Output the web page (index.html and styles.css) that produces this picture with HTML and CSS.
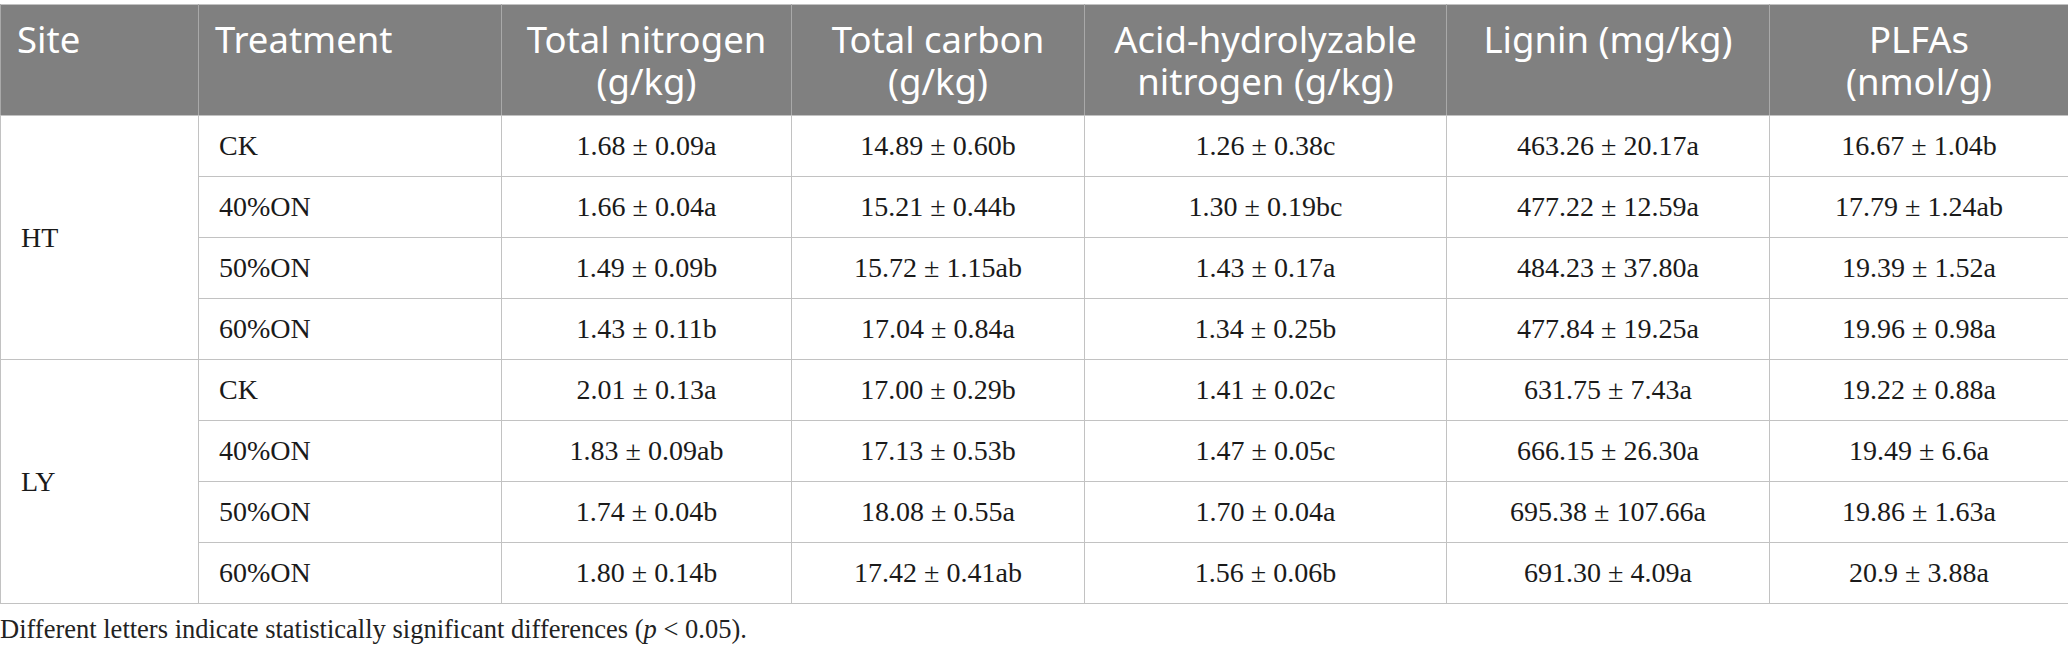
FILE: index.html
```html
<!DOCTYPE html>
<html lang="en">
<head>
    <meta charset="UTF-8">
    <title>Soil properties table</title>
    <link rel="stylesheet" href="styles.css">
</head>
<body>
    <div class="wrap">
        <table class="data">
            <colgroup>
                <col class="c-site">
                <col class="c-treat">
                <col class="c-tn">
                <col class="c-tc">
                <col class="c-ahn">
                <col class="c-lig">
                <col class="c-plfa">
            </colgroup>
            <thead>
                <tr>
                    <th class="left">Site</th>
                    <th class="left">Treatment</th>
                    <th>Total nitrogen (g/kg)</th>
                    <th>Total carbon (g/kg)</th>
                    <th>Acid-hydrolyzable nitrogen (g/kg)</th>
                    <th>Lignin (mg/kg)</th>
                    <th>PLFAs<br>(nmol/g)</th>
                </tr>
            </thead>
            <tbody>
                <tr>
                    <td class="site" rowspan="4">HT</td>
                    <td class="left">CK</td>
                    <td>1.68 ± 0.09a</td>
                    <td>14.89 ± 0.60b</td>
                    <td>1.26 ± 0.38c</td>
                    <td>463.26 ± 20.17a</td>
                    <td>16.67 ± 1.04b</td>
                </tr>
                <tr>
                    <td class="left">40%ON</td>
                    <td>1.66 ± 0.04a</td>
                    <td>15.21 ± 0.44b</td>
                    <td>1.30 ± 0.19bc</td>
                    <td>477.22 ± 12.59a</td>
                    <td>17.79 ± 1.24ab</td>
                </tr>
                <tr>
                    <td class="left">50%ON</td>
                    <td>1.49 ± 0.09b</td>
                    <td>15.72 ± 1.15ab</td>
                    <td>1.43 ± 0.17a</td>
                    <td>484.23 ± 37.80a</td>
                    <td>19.39 ± 1.52a</td>
                </tr>
                <tr>
                    <td class="left">60%ON</td>
                    <td>1.43 ± 0.11b</td>
                    <td>17.04 ± 0.84a</td>
                    <td>1.34 ± 0.25b</td>
                    <td>477.84 ± 19.25a</td>
                    <td>19.96 ± 0.98a</td>
                </tr>
                <tr>
                    <td class="site" rowspan="4">LY</td>
                    <td class="left">CK</td>
                    <td>2.01 ± 0.13a</td>
                    <td>17.00 ± 0.29b</td>
                    <td>1.41 ± 0.02c</td>
                    <td>631.75 ± 7.43a</td>
                    <td>19.22 ± 0.88a</td>
                </tr>
                <tr>
                    <td class="left">40%ON</td>
                    <td>1.83 ± 0.09ab</td>
                    <td>17.13 ± 0.53b</td>
                    <td>1.47 ± 0.05c</td>
                    <td>666.15 ± 26.30a</td>
                    <td>19.49 ± 6.6a</td>
                </tr>
                <tr>
                    <td class="left">50%ON</td>
                    <td>1.74 ± 0.04b</td>
                    <td>18.08 ± 0.55a</td>
                    <td>1.70 ± 0.04a</td>
                    <td>695.38 ± 107.66a</td>
                    <td>19.86 ± 1.63a</td>
                </tr>
                <tr>
                    <td class="left">60%ON</td>
                    <td>1.80 ± 0.14b</td>
                    <td>17.42 ± 0.41ab</td>
                    <td>1.56 ± 0.06b</td>
                    <td>691.30 ± 4.09a</td>
                    <td>20.9 ± 3.88a</td>
                </tr>
            </tbody>
        </table>
        <p class="note">Different letters indicate statistically significant differences (<i>p</i> &lt; 0.05).</p>
    </div>
</body>
</html>
```

FILE: styles.css
```css
body {
    margin: 0;
    padding: 0;
    background: #ffffff;
    color: #1a1a1a;
    font-family: 'Liberation Serif', serif;
}

.wrap {
    padding-top: 4px;
}

.data {
    width: 100%;
    border-collapse: collapse;
    table-layout: fixed;
    border: 1px solid #c2c2c2;
}

.c-site { width: 198px; }
.c-treat { width: 303px; }
.c-tn { width: 290px; }
.c-tc { width: 293px; }
.c-ahn { width: 362px; }
.c-lig { width: 323px; }
.c-plfa { width: 299px; }

th {
    background-color: #808080;
    color: #ffffff;
    font-family: 'Noto Sans', sans-serif;
    font-weight: 400;
    font-size: 36.5px;
    line-height: 42px;
    text-align: center;
    vertical-align: top;
    padding: 13px 8px 13px;
    height: 84px;
    border-left: 1px solid #a9a9a9;
    border-right: 1px solid #a9a9a9;
    border-bottom: 1px solid #c2c2c2;
}

th.left {
    text-align: left;
    padding-left: 16px;
}

td {
    font-size: 28px;
    height: 60px;
    padding: 0 16px;
    text-align: center;
    vertical-align: middle;
    border: 1px solid #c2c2c2;
}

td.left,
td.site {
    text-align: left;
    padding-left: 20px;
}

.note {
    margin: 10px 0 0;
    font-size: 26.5px;
    color: #222222;
}
```
